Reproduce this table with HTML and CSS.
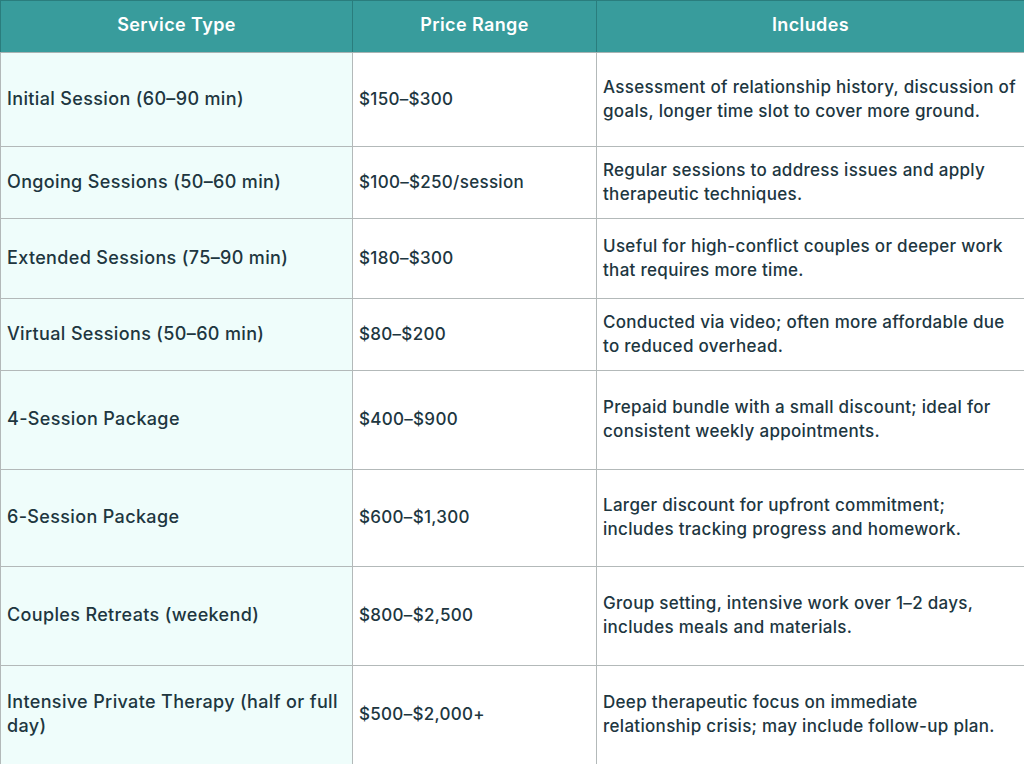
FILE: index.html
```html
<!DOCTYPE html>
<html lang="en">
<head>
<meta charset="utf-8">
<title>Couples Therapy Pricing</title>
<link rel="stylesheet" href="styles.css">
</head>
<body>
<table class="price-table">
  <colgroup>
    <col class="c-service">
    <col class="c-price">
    <col class="c-incl">
  </colgroup>
  <thead>
    <tr class="head-row">
      <th>Service Type</th>
      <th>Price Range</th>
      <th>Includes</th>
    </tr>
  </thead>
  <tbody>
    <tr class="r1">
      <td class="svc">Initial Session (60–90 min)</td>
      <td>$150–$300</td>
      <td>Assessment of relationship history, discussion of goals, longer time slot to cover more ground.</td>
    </tr>
    <tr class="r2">
      <td class="svc">Ongoing Sessions (50–60 min)</td>
      <td>$100–$250/session</td>
      <td>Regular sessions to address issues and apply therapeutic techniques.</td>
    </tr>
    <tr class="r3">
      <td class="svc">Extended Sessions (75–90 min)</td>
      <td>$180–$300</td>
      <td>Useful for high-conflict couples or deeper work that requires more time.</td>
    </tr>
    <tr class="r4">
      <td class="svc">Virtual Sessions (50–60 min)</td>
      <td>$80–$200</td>
      <td>Conducted via video; often more affordable due to reduced overhead.</td>
    </tr>
    <tr class="r5">
      <td class="svc">4-Session Package</td>
      <td>$400–$900</td>
      <td>Prepaid bundle with a small discount; ideal for consistent weekly appointments.</td>
    </tr>
    <tr class="r6">
      <td class="svc">6-Session Package</td>
      <td>$600–$1,300</td>
      <td>Larger discount for upfront commitment; includes tracking progress and homework.</td>
    </tr>
    <tr class="r7">
      <td class="svc">Couples Retreats (weekend)</td>
      <td>$800–$2,500</td>
      <td>Group setting, intensive work over 1–2 days, includes meals and materials.</td>
    </tr>
    <tr class="r8">
      <td class="svc">Intensive Private Therapy (half or full day)</td>
      <td>$500–$2,000+</td>
      <td>Deep therapeutic focus on immediate relationship crisis; may include follow-up plan.</td>
    </tr>
  </tbody>
</table>
</body>
</html>
```

FILE: styles.css
```css
html, body {
  margin: 0;
  padding: 0;
  background: #ffffff;
}

body {
  font-family: "Inter", "Noto Sans", "Liberation Sans", sans-serif;
  color: #20363f;
  overflow: hidden;
}

.price-table {
  width: 1024px;
  border-collapse: collapse;
  table-layout: fixed;
}

.c-service { width: 352px; }
.c-price { width: 244px; }
.c-incl { width: 428px; }

.head-row th {
  height: 52px;
  padding: 0 6px 5px;
  box-sizing: border-box;
  background: #389c9c;
  color: #ffffff;
  font-size: 18px;
  font-weight: 600;
  letter-spacing: 0.4px;
  text-align: center;
  border: 1px solid #2a7d7d;
  border-bottom: 1px solid #a9b3b3;
}

td {
  padding: 0 6px 2px;
  font-size: 17px;
  font-weight: 500;
  letter-spacing: 0.3px;
  line-height: 24px;
  vertical-align: middle;
  border: 1px solid #b3b9b9;
  box-sizing: border-box;
}

td.svc {
  background: #effdfb;
  font-size: 18px;
  letter-spacing: 0.35px;
}

.r1 td { height: 94px; }
.r2 td { height: 72px; }
.r3 td { height: 80px; }
.r4 td { height: 72px; }
.r5 td { height: 99px; }
.r6 td { height: 97px; }
.r7 td { height: 99px; }
.r8 td { height: 99px; }
```
